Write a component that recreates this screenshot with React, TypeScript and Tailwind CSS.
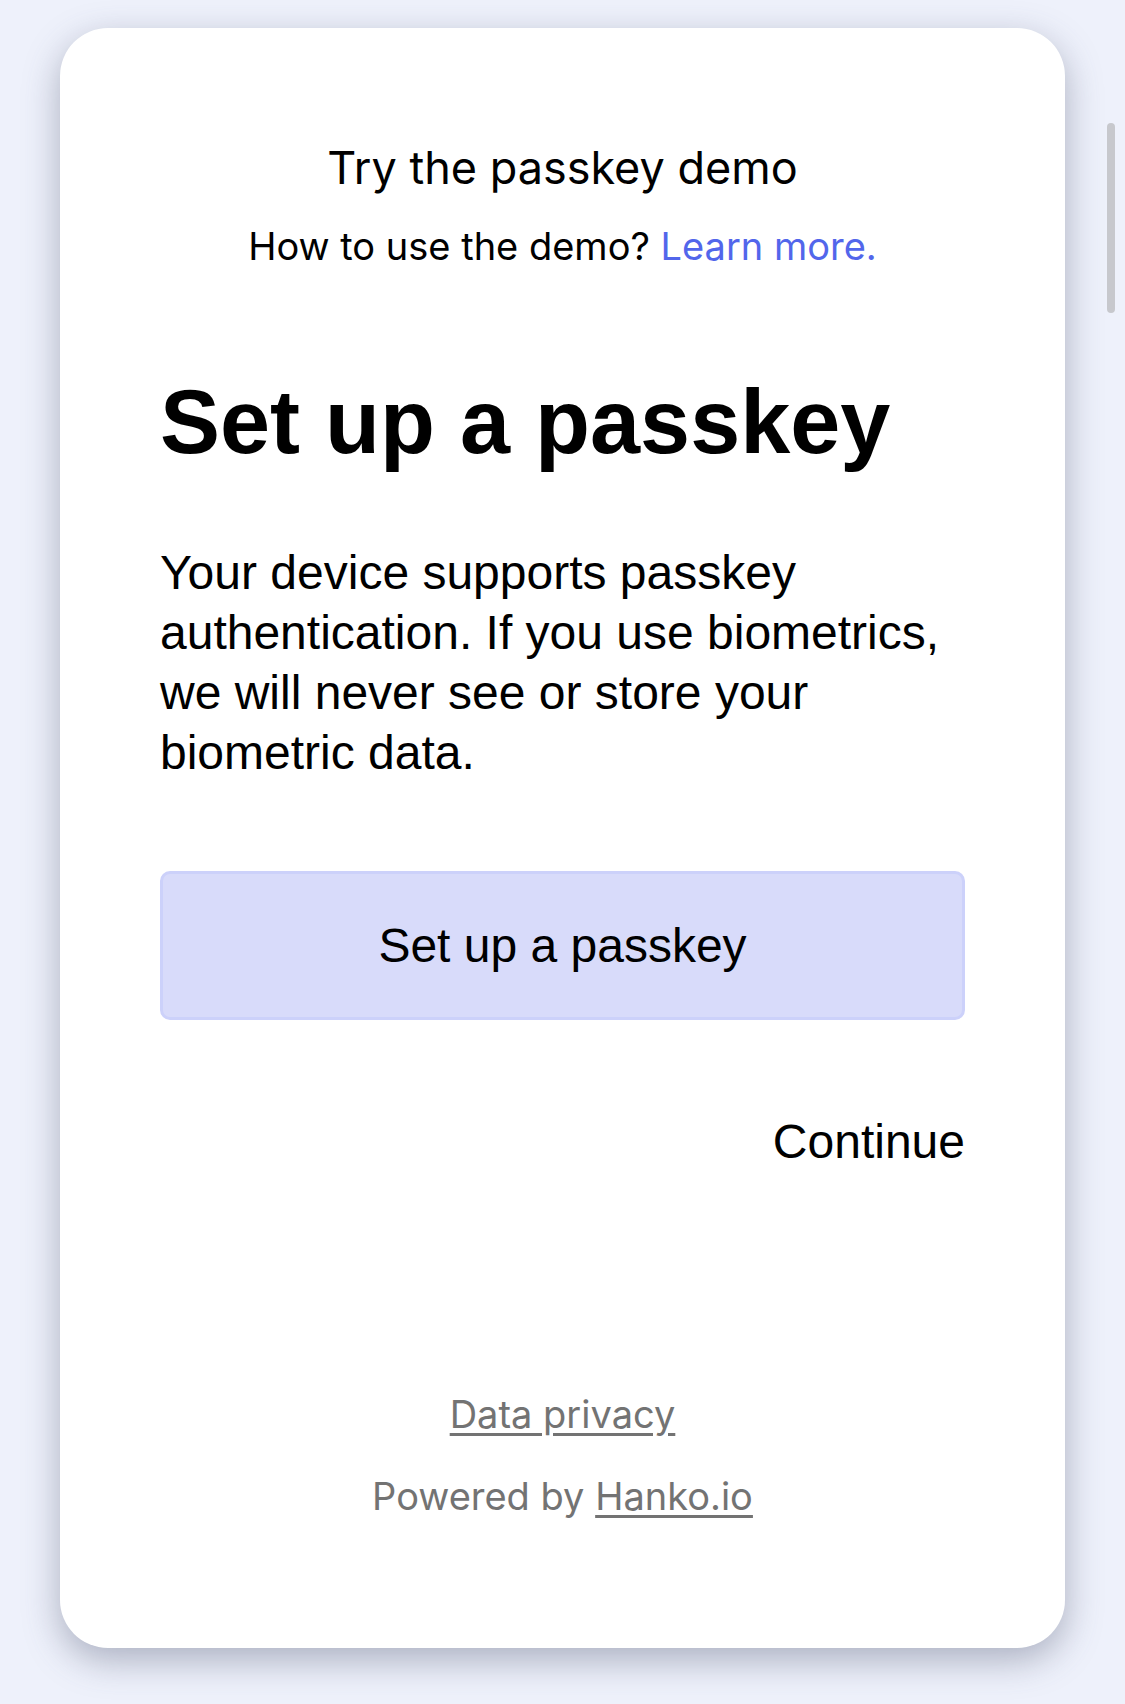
import React from "react";

// Tarjeta de registro de passkey (demo de Hanko)
const App = () => {
  return (
    <div className="relative min-h-screen w-full bg-[#eef1fb] pt-[28px] pb-[56px]">
      {/* barra de scroll superpuesta */}
      <div className="absolute left-[1107px] top-[123px] h-[190px] w-[8px] rounded-full bg-[#c7c8cd]" />

      <div className="mx-[60px] flex h-[1620px] flex-col rounded-[48px] bg-white px-[100px] pt-[113px] shadow-[0_12px_36px_rgba(70,78,105,0.4)]">
        {/* encabezado de la demo */}
        <div className="flex flex-col items-center font-['Inter',sans-serif] text-black">
          <p className="text-[45px] leading-[54px]">Try the passkey demo</p>
          <p className="mt-6 text-[38px] leading-[54px]">
            How to use the demo? <span className="text-[#5266eb]">Learn more.</span>
          </p>
        </div>

        {/* contenido principal */}
        <div className="font-['Liberation_Sans',Arial,sans-serif] text-black">
          <h1 className="mt-[100px] text-[90px] font-bold leading-[99px]">Set up a passkey</h1>
          <p className="mt-[71px] text-[48px] leading-[60px]">
            Your device supports passkey authentication. If you use biometrics, we will never see or store your
            biometric data.
          </p>
          <button className="mt-[88px] flex h-[149px] w-full items-center justify-center rounded-[10px] border-[3px] border-[#ccd1fa] bg-[#d8dbfa] text-[48px] text-black">
            Set up a passkey
          </button>
          <div className="mt-[92px] flex justify-end">
            <button className="text-[48px] leading-[60px]">Continue</button>
          </div>
        </div>

        {/* pie */}
        <div className="mt-[218px] flex flex-col items-center font-['Inter',sans-serif] text-[38px] leading-[48px] text-[#737373]">
          <a className="underline underline-offset-[5px]">Data privacy</a>
          <p className="mt-[34px]">
            Powered by <a className="underline underline-offset-[5px]">Hanko.io</a>
          </p>
        </div>
      </div>
    </div>
  );
};

export default App;
